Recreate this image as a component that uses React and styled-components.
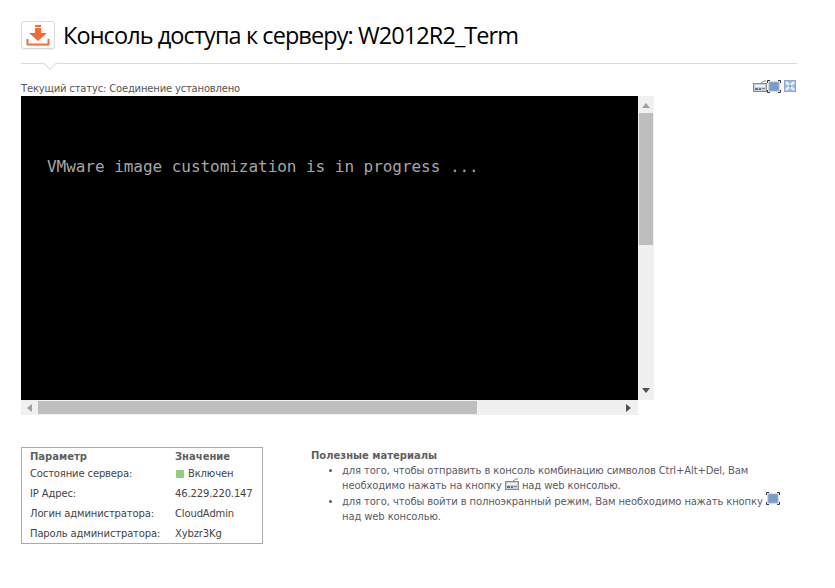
import React from 'react';
import styled, { createGlobalStyle } from 'styled-components';

const Global = createGlobalStyle`
    html, body {
        margin: 0;
        padding: 0;
        background: #fff;
    }
    body {
        font-family: "Noto Sans", "DejaVu Sans", sans-serif;
    }
`

const Page = styled.div`
    width: 776px;
    padding: 18px 0 0 21px;
`

const Header = styled.div`
    display: flex;
    align-items: center;
    gap: 8px;
    height: 34px;
`

const HeaderIcon = styled.div`
    width: 32px;
    height: 26px;
    border: 1px solid #d8d8d8;
    border-radius: 3px;
    display: flex;
    align-items: center;
    justify-content: center;
    box-shadow: 0 1px 1px #eee;
`

const Title = styled.h1`
    margin: -1px 0 0;
    font-family: "Open Sans", sans-serif;
    font-weight: 400;
    font-size: 23.5px;
    letter-spacing: -0.92px;
    color: #000;
    white-space: nowrap;
`

const Divider = styled.div`
    position: relative;
    height: 1px;
    margin-top: 11px;
    background: #dcdcdc;

    &::after {
        content: '';
        position: absolute;
        left: 24px;
        top: -5px;
        width: 9px;
        height: 9px;
        background: #fff;
        border-right: 1px solid #dcdcdc;
        border-bottom: 1px solid #dcdcdc;
        transform: rotate(45deg);
    }
`

const StatusRow = styled.div`
    display: flex;
    justify-content: space-between;
    align-items: flex-end;
    height: 32px;
`

const Status = styled.div`
    font-family: "DejaVu Sans", sans-serif;
    font-size: 10px;
    color: #555;
    line-height: 14px;
    letter-spacing: -0.18px;
`

const Tools = styled.div`
    display: flex;
    margin: 0 1px 3px 0;

    svg:last-child {
        margin-left: 3px;
    }
`

const Console = styled.div`
    display: grid;
    grid-template-columns: 617px 16px;
    grid-template-rows: 304px 15px;
    width: 633px;
`

const Screen = styled.div`
    background: #000;
    color: #a6a6a6;
    font-family: "DejaVu Sans Mono", monospace;
    font-size: 16px;
    letter-spacing: -0.04px;
    line-height: 20px;
    padding: 61px 0 0 26px;
    box-sizing: border-box;
    white-space: pre;
`

const VTrack = styled.div`
    background: #f0f0f0;
    display: flex;
    flex-direction: column;
    align-items: center;
    height: 304px;
    padding-top: 7px;
    box-sizing: border-box;
`

const VThumb = styled.div`
    width: 14px;
    height: 132px;
    margin-top: 5px;
    background: #bebebe;
    flex: none;
`

const ArrowUp = styled.div`
    width: 0;
    height: 0;
    border-left: 4px solid transparent;
    border-right: 4px solid transparent;
    border-bottom: 5px solid #a0a0a0;
`

const ArrowDown = styled.div`
    width: 0;
    height: 0;
    margin-top: auto;
    margin-bottom: 7px;
    border-left: 4px solid transparent;
    border-right: 4px solid transparent;
    border-top: 5px solid #505050;
`

const HTrack = styled.div`
    background: #f0f0f0;
    display: flex;
    align-items: center;
    padding: 0 7px 0 6px;
    box-sizing: border-box;
`

const HThumb = styled.div`
    width: 439px;
    height: 13px;
    margin-left: 6px;
    background: #bebebe;
`

const ArrowLeft = styled.div`
    width: 0;
    height: 0;
    border-top: 4px solid transparent;
    border-bottom: 4px solid transparent;
    border-right: 5px solid #a0a0a0;
`

const ArrowRight = styled.div`
    width: 0;
    height: 0;
    margin-left: auto;
    border-top: 4px solid transparent;
    border-bottom: 4px solid transparent;
    border-left: 5px solid #505050;
`

const Bottom = styled.div`
    display: flex;
    margin-top: 32px;
`

const InfoTable = styled.div`
    width: 232px;
    height: 93px;
    border: 1px solid #aaa;
    flex: none;
    padding: 2px 0 0 8px;
    margin-right: 48px;
`

const InfoRow = styled.div`
    display: grid;
    grid-template-columns: 145px 1fr;
    font-family: "DejaVu Sans", sans-serif;
    font-size: 10px;
    height: ${props => (props.$head ? '14px' : '20px')};
    line-height: ${props => (props.$head ? '13px' : '20px')};
    font-weight: ${props => (props.$head ? 700 : 400)};
    letter-spacing: ${props => (props.$head ? '0' : '-0.14px')};
    color: ${props => (props.$head ? '#5f5f5f' : '#444')};
    white-space: nowrap;
`

const Dot = styled.span`
    display: inline-block;
    width: 8px;
    height: 8px;
    margin: 0 4px 0 1px;
    border-radius: 1px;
    background: #92cf7c;
    vertical-align: -1px;
`

const Notes = styled.div`
    font-family: "DejaVu Sans", sans-serif;
    font-size: 10px;
    width: 480px;
    padding-top: 1px;
`

const NotesTitle = styled.div`
    font-weight: 700;
    color: #5f5f5f;
    line-height: 15px;
`

const NotesList = styled.ul`
    margin: 0;
    padding: 0 0 0 31px;
`

const Note = styled.li`
    line-height: 15px;
    color: #5a5a68;
    letter-spacing: -0.12px;
    white-space: nowrap;

    & + & {
        margin-top: 1px;
    }
`

const InlineIcon = styled.span`
    display: inline-block;
    height: 8px;
    vertical-align: ${props => props.$shift};

    svg {
        display: block;
        margin-top: ${props => props.$lift};
    }
`

const KeyboardIcon = () => (
    <svg width="14" height="12" viewBox="0 0 14 12">
        <path d="M8 3 L11 1 H13" stroke="#8a8a8a" fill="none" />
        <rect x="0.5" y="3.5" width="13" height="8" fill="#cfcfcf" stroke="#8a8a8a" />
        <rect x="2" y="5" width="10" height="2" fill="#f4f4f4" />
        <rect x="2" y="8" width="3" height="2" fill="#2f7fcf" />
        <rect x="6" y="8" width="2" height="2" fill="#2f7fcf" />
        <rect x="9" y="8" width="3" height="1" fill="#888" />
    </svg>
)

const FullIcon = () => (
    <svg width="14" height="13" viewBox="0 0 14 13">
        <rect x="2" y="2" width="10" height="9" fill="#7c9cc8" stroke="#9fb6d6" />
        <path d="M0.5 3V0.5H3M11 0.5H13.5V3M13.5 10V12.5H11M3 12.5H0.5V10" stroke="#333" fill="none" />
    </svg>
)

const CloseFullIcon = () => (
    <svg width="12" height="12" viewBox="0 0 12 12">
        <rect x="0.5" y="0.5" width="11" height="11" fill="#a0bde0" stroke="#8faad0" />
        <path d="M2 2L10 10M10 2L2 10" stroke="#f4f8fc" strokeWidth="2" />
        <circle cx="6" cy="6" r="1.5" fill="#7c9cc8" />
    </svg>
)

const DownloadIcon = () => (
    <svg width="24" height="22" viewBox="0 0 24 22">
        <path d="M9 1H15V3H9ZM9 4H15V9H21L12 17L3 9H9Z" fill="#f26b38" />
        <path d="M1.5 15V20.5H22.5V15" stroke="#f26b38" strokeWidth="2" fill="none" strokeLinejoin="round" />
    </svg>
)

const rows = [
    ['Состояние сервера:', <><Dot />Включен</>],
    ['IP Адрес:', '46.229.220.147'],
    ['Логин администратора:', 'CloudAdmin'],
    ['Пароль администратора:', 'Xybzr3Kg'],
]

class App extends React.Component {
    render () {
        return (
            <Page>
                <Global />
                <Header>
                    <HeaderIcon><DownloadIcon /></HeaderIcon>
                    <Title>Консоль доступа к серверу: W2012R2_Term</Title>
                </Header>
                <Divider />
                <StatusRow>
                    <Status>Текущий статус: Соединение установлено</Status>
                    <Tools>
                        <KeyboardIcon />
                        <FullIcon />
                        <CloseFullIcon />
                    </Tools>
                </StatusRow>
                <Console>
                    <Screen>VMware image customization is in progress ...</Screen>
                    <VTrack>
                        <ArrowUp />
                        <VThumb />
                        <ArrowDown />
                    </VTrack>
                    <HTrack>
                        <ArrowLeft />
                        <HThumb />
                        <ArrowRight />
                    </HTrack>
                </Console>
                <Bottom>
                    <InfoTable>
                        <InfoRow $head>
                            <span>Параметр</span>
                            <span>Значение</span>
                        </InfoRow>
                        {rows.map(([key, value]) => (
                            <InfoRow key={key}>
                                <span>{key}</span>
                                <span>{value}</span>
                            </InfoRow>
                        ))}
                    </InfoTable>
                    <Notes>
                        <NotesTitle>Полезные материалы</NotesTitle>
                        <NotesList>
                            <Note>для того, чтобы отправить в консоль комбинацию символов Ctrl+Alt+Del, Вам<br />
                                необходимо нажать на кнопку <InlineIcon $shift="-1px" $lift="-4px"><KeyboardIcon /></InlineIcon> над web консолью.</Note>
                            <Note>для того, чтобы войти в полноэкранный режим, Вам необходимо нажать кнопку <InlineIcon $shift="0" $lift="-5px"><FullIcon /></InlineIcon><br />
                                над web консолью.</Note>
                        </NotesList>
                    </Notes>
                </Bottom>
            </Page>
        )
    }
}

export default App
